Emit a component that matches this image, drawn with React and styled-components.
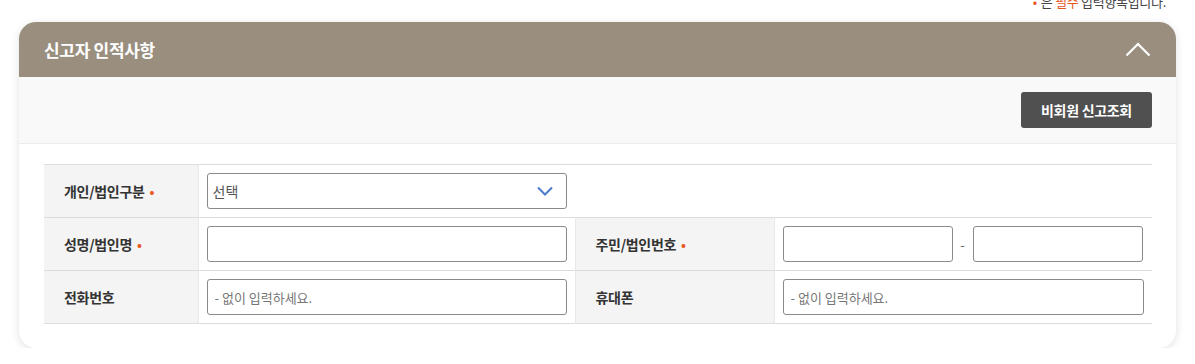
import React from "react";
import styled, { createGlobalStyle } from "styled-components";

const Global = createGlobalStyle`
  html, body { margin: 0; padding: 0; background: #fff; }
  body { font-family: "Noto Sans CJK KR", "Noto Sans", sans-serif; color: #333; overflow: hidden; }
  * { box-sizing: border-box; }
`;

const Page = styled.div`
  padding: 0 19px;
`;

const Note = styled.div`
  margin-top: -6px;
  margin-bottom: 12px;
  height: 16px;
  line-height: 16px;
  font-size: 13px;
  color: #444;
  text-align: right;
  padding-right: 10px;
  letter-spacing: -0.3px;
`;

const Dot = styled.span`
  color: #e8571e;
  font-size: 13px;
  margin: ${(p) => (p.$after ? "0 0 0 5px" : "0 4px 0 0")};
`;

const Red = styled.span`
  color: #e8571e;
`;

const Card = styled.section`
  border-radius: 17px;
  overflow: hidden;
  background: #fff;
  box-shadow: 0 2px 8px rgba(0, 0, 0, 0.12);
`;

const Header = styled.header`
  height: 55px;
  background: #9a8f7f;
  display: flex;
  align-items: center;
  justify-content: space-between;
  padding: 0 25px 0 25px;
`;

const Title = styled.h2`
  margin: 0;
  font-size: 17px;
  font-weight: 700;
  color: #fff;
  letter-spacing: -0.3px;
`;

const Toggle = styled.button`
  border: 0;
  background: none;
  padding: 0;
  display: flex;
  cursor: pointer;
`;

const Band = styled.div`
  background: #f9f9f9;
  border-bottom: 1px solid #ececec;
  display: flex;
  justify-content: flex-end;
  padding: 15px 24px 15px 25px;
`;

const DarkButton = styled.button`
  height: 36px;
  width: 131px;
  border: 0;
  border-radius: 3px;
  background: #505050;
  color: #fff;
  font-family: inherit;
  font-size: 14px;
  font-weight: 700;
  letter-spacing: -0.3px;
`;

const Body = styled.div`
  padding: 20px 24px 24px 25px;
`;

const Table = styled.table`
  width: 100%;
  border-collapse: collapse;
  border-top: 1px solid #dcdcdc;
  table-layout: fixed;
`;

const Row = styled.tr`
  height: 53px;
  border-bottom: 1px solid #dcdcdc;
`;

const Label = styled.th`
  background: #f4f4f4;
  text-align: left;
  font-size: 14px;
  font-weight: 600;
  color: #333;
  padding: 0 0 0 20px;
  border-right: 1px solid #e8e8e8;
  letter-spacing: -0.3px;
`;

const Cell = styled.td`
  padding: 0 8px 0 8px;
  border-right: ${(p) => (p.$divider ? "1px solid #e8e8e8" : "0")};
`;

const Input = styled.input`
  display: block;
  width: ${(p) => p.$w || "100%"};
  height: 36px;
  border: 1px solid #8a8a8a;
  border-radius: 3px;
  padding: 0 7px;
  font-family: inherit;
  font-size: 13px;
  color: #333;
  &::placeholder { color: #777; }
`;

const SelectBox = styled.div`
  width: 360px;
  height: 36px;
  border: 1px solid #8a8a8a;
  border-radius: 3px;
  display: flex;
  align-items: center;
  justify-content: space-between;
  padding: 0 13px 0 5px;
  font-size: 14px;
  color: #555;
  background: #fff;
`;

const Pair = styled.div`
  display: flex;
  align-items: center;
`;

const Dash = styled.span`
  width: 20px;
  text-align: center;
  font-size: 13px;
  color: #666;
`;

export default function App() {
  return (
    <>
      <Global />
      <Page>
        <Note>
          <Dot>•</Dot>은 <Red>필수</Red> 입력항목입니다.
        </Note>
        <Card>
          <Header>
            <Title>신고자 인적사항</Title>
            <Toggle aria-label="접기">
              <svg width="26" height="15" viewBox="0 0 26 15">
                <path d="M1.5 13.5 L13 2 L24.5 13.5" fill="none" stroke="#fff" strokeWidth="2.2" />
              </svg>
            </Toggle>
          </Header>
          <Band>
            <DarkButton>비회원 신고조회</DarkButton>
          </Band>
          <Body>
            <Table>
              <colgroup>
                <col style={{ width: 154 }} />
                <col style={{ width: 377 }} />
                <col style={{ width: 199 }} />
                <col />
              </colgroup>
              <tbody>
                <Row>
                  <Label>
                    개인/법인구분<Dot $after>•</Dot>
                  </Label>
                  <Cell colSpan={3}>
                    <SelectBox>
                      <span>선택</span>
                      <svg width="16" height="10" viewBox="0 0 16 10">
                        <path d="M1 1.5 L8 8.5 L15 1.5" fill="none" stroke="#4a7cc9" strokeWidth="2" />
                      </svg>
                    </SelectBox>
                  </Cell>
                </Row>
                <Row>
                  <Label>
                    성명/법인명<Dot $after>•</Dot>
                  </Label>
                  <Cell $divider>
                    <Input />
                  </Cell>
                  <Label>
                    주민/법인번호<Dot $after>•</Dot>
                  </Label>
                  <Cell>
                    <Pair>
                      <Input $w="170px" />
                      <Dash>-</Dash>
                      <Input $w="170px" />
                    </Pair>
                  </Cell>
                </Row>
                <Row>
                  <Label>전화번호</Label>
                  <Cell $divider>
                    <Input placeholder="- 없이 입력하세요." />
                  </Cell>
                  <Label>휴대폰</Label>
                  <Cell>
                    <Input placeholder="- 없이 입력하세요." />
                  </Cell>
                </Row>
              </tbody>
            </Table>
          </Body>
        </Card>
      </Page>
    </>
  );
}
